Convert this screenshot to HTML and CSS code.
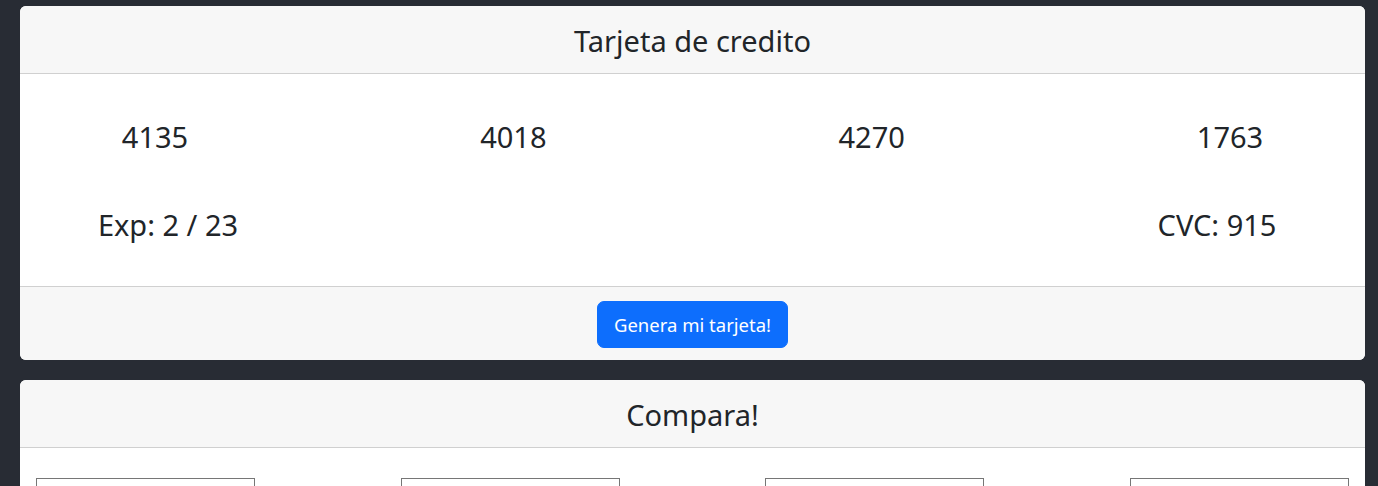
FILE: index.html
```html
<!DOCTYPE html>
<html lang="es">
<head>
<meta charset="utf-8">
<title>Tarjeta de credito</title>
<link rel="stylesheet" href="styles.css">
</head>
<body>
<div class="app">
  <section class="card">
    <header class="card-header">Tarjeta de credito</header>
    <div class="card-body">
      <div class="numbers">
        <div class="num">4135</div>
        <div class="num">4018</div>
        <div class="num">4270</div>
        <div class="num">1763</div>
      </div>
      <div class="meta">
        <div class="meta-item">Exp: 2 / 23</div>
        <div class="meta-item">CVC: 915</div>
      </div>
    </div>
    <footer class="card-footer">
      <button class="btn" type="button">Genera mi tarjeta!</button>
    </footer>
  </section>
  <section class="card">
    <header class="card-header">Compara!</header>
    <div class="card-body compare">
      <input class="field" type="text">
      <input class="field" type="text">
      <input class="field" type="text">
      <input class="field" type="text">
    </div>
  </section>
</div>
</body>
</html>
```
FILE: styles.css
```css
html, body {
  margin: 0;
  padding: 0;
  background: #282c34;
  height: 100%;
  overflow: hidden;
}
body {
  font-family: "Noto Sans", "Open Sans", sans-serif;
  color: #212529;
}
.app {
  display: flex;
  flex-direction: column;
  gap: 20px;
  padding: 6px 13px 0 20px;
}
.card {
  background: #fff;
  border-radius: 6px;
  width: 1345px;
}
.card-header {
  background: #f7f7f7;
  border-bottom: 1px solid #d0d0d0;
  border-radius: 6px 6px 0 0;
  padding: 16px 16px 13px;
  font-size: 29px;
  line-height: 38px;
  text-align: center;
}
.card-body {
  padding: 44px 0 42px;
  display: flex;
  flex-direction: column;
  gap: 50px;
}
.numbers {
  display: flex;
  justify-content: center;
}
.num {
  flex: 0 0 358.33px;
  text-align: center;
  font-size: 29px;
  line-height: 38px;
}
.meta {
  display: flex;
  justify-content: space-between;
}
.meta-item {
  flex: 0 0 296px;
  text-align: center;
  font-size: 29px;
  line-height: 38px;
}
.card-footer {
  background: #f7f7f7;
  border-top: 1px solid #d0d0d0;
  border-radius: 0 0 6px 6px;
  padding: 14px 16px 12px;
  display: flex;
  justify-content: center;
}
.btn {
  background: #0d6efd;
  color: #fff;
  border: 1px solid #0d6efd;
  border-radius: 7px;
  font-family: "Noto Sans", "Open Sans", sans-serif;
  font-size: 18.5px;
  line-height: 27px;
  padding: 9px 0;
  width: 191px;
  height: 47px;
  white-space: nowrap;
  cursor: pointer;
}
.compare {
  flex-direction: row;
  justify-content: space-between;
  padding: 30px 16px 20px;
}
.field {
  width: 219px;
  height: 30px;
  box-sizing: border-box;
  border: 1px solid #767676;
  border-radius: 0;
  padding: 1px 2px;
  margin: 0;
  background: #fff;
}
```
